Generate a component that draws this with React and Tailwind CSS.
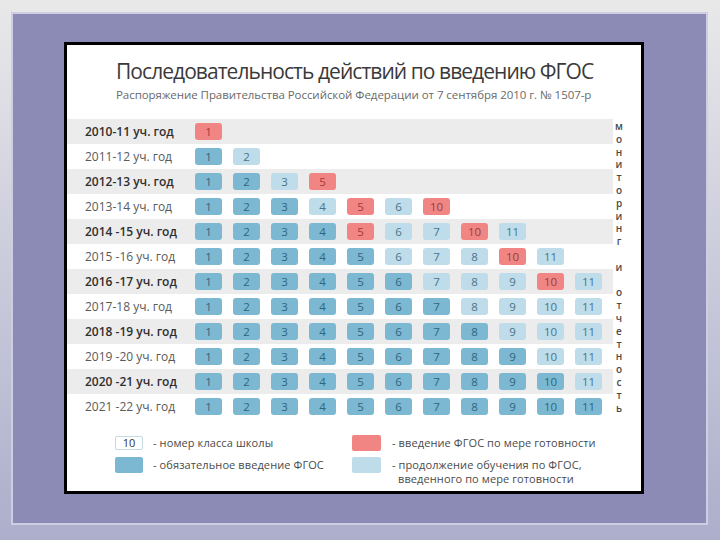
import React from 'react';

const CELL = {
    d: 'bg-[#7cb8d1] text-[#2f6580]',
    l: 'bg-[#bedcea] text-[#4b7488]',
    r: 'bg-[#f08584] text-[#9a3c3c]',
};

const LABELS = [
    '2010-11 уч. год',
    '2011-12 уч. год',
    '2012-13 уч. год',
    '2013-14 уч. год',
    '2014 -15 уч. год',
    '2015 -16 уч. год',
    '2016 -17 уч. год',
    '2017-18 уч. год',
    '2018 -19 уч. год',
    '2019 -20 уч. год',
    '2020 -21 уч. год',
    '2021 -22 уч. год',
];

const EARLY = [
    [[1, 'r']],
    [[1, 'd'], [2, 'l']],
    [[1, 'd'], [2, 'd'], [3, 'l'], [5, 'r']],
    [[1, 'd'], [2, 'd'], [3, 'd'], [4, 'l'], [5, 'r'], [6, 'l'], [10, 'r']],
    [[1, 'd'], [2, 'd'], [3, 'd'], [4, 'd'], [5, 'r'], [6, 'l'], [7, 'l'], [10, 'r'], [11, 'l']],
    [[1, 'd'], [2, 'd'], [3, 'd'], [4, 'd'], [5, 'd'], [6, 'l'], [7, 'l'], [8, 'l'], [10, 'r'], [11, 'l']],
    [[1, 'd'], [2, 'd'], [3, 'd'], [4, 'd'], [5, 'd'], [6, 'd'], [7, 'l'], [8, 'l'], [9, 'l'], [10, 'r'], [11, 'l']],
];

// rows 8..12: all grades, mandatory up to (index) grades
const ROWS = LABELS.map((label, i) => {
    if (i < EARLY.length) return { label, cells: EARLY[i] };
    const cells = [];
    for (let g = 1; g <= 11; g++) cells.push([g, g <= i ? 'd' : 'l']);
    return { label, cells };
});

const VERTICAL = 'мониторинг и отчетность'.split('');

function Row({ row, index }) {
    const odd = index % 2 === 0;
    return (
        <div className={`flex h-[25px] items-center ${odd ? 'bg-[#ececec]' : 'bg-white'}`}>
            <div className={`w-[128px] pl-[18px] text-[12px] ${odd ? 'font-semibold text-[#2f2f2f]' : 'text-[#5a5a5a]'}`}>
                {row.label}
            </div>
            <div className="flex gap-[11px]">
                {row.cells.map(([n, t]) => (
                    <div key={n} className={`flex h-[17px] w-[27px] items-center justify-center rounded-[3px] text-[11.5px] ${CELL[t]}`}>
                        {n}
                    </div>
                ))}
            </div>
        </div>
    );
}

export default function App() {
    return (
        <div className="h-[540px] w-[720px] overflow-hidden bg-gradient-to-b from-[#e9e9ea] to-[#acaecb] pl-[11px] pt-[12px]" style={{ fontFamily: '"Open Sans", "Noto Sans", sans-serif' }}>
            <div className="h-[513px] w-[697px] border-2 border-[#cdcee3] bg-[#8b8bb6] pl-[51px] pt-[28px]">
                <div className="h-[452px] w-[580px] border-[3px] border-black bg-white">
                    <div className="pl-[49px] pt-[13px]">
                        <div className="text-[21px] leading-[26px] tracking-[-0.95px] text-[#3a3a3a]">
                            Последовательность действий по введению ФГОС
                        </div>
                        <div className="mt-[4px] text-[11.5px] leading-[14px] tracking-[-0.05px] text-[#6a6a6a]">
                            Распоряжение Правительства Российской Федерации от 7 сентября 2010 г. № 1507-р
                        </div>
                    </div>

                    <div className="mt-[17px] flex">
                        <div className="w-[546px]">
                            {ROWS.map((row, i) => (
                                <Row key={row.label} row={row} index={i} />
                            ))}
                        </div>
                        <div className="flex w-[12px] flex-col items-center pt-[1px] text-[10px] font-semibold leading-[12.8px] text-[#4a4a4a]">
                            {VERTICAL.map((ch, i) => (
                                <span key={i} className="h-[12.8px]">{ch === ' ' ? '\u00a0' : ch}</span>
                            ))}
                        </div>
                    </div>

                    <div className="mt-[16px] grid grid-cols-[237px_1fr] gap-y-[6px] pl-[48px] text-[11px] font-medium leading-[14px] tracking-[0.1px] text-[#4a4a4a]">
                        <div className="flex items-center gap-[10px]">
                            <div className="flex h-[14px] w-[28px] items-center justify-center rounded-[2px] border border-[#c5d9e2] bg-white text-[11px] tracking-normal text-[#333]">10</div>
                            <span>- номер класса школы</span>
                        </div>
                        <div className="flex items-center gap-[11px]">
                            <div className="h-[16px] w-[29px] rounded-[2px] bg-[#f08584]" />
                            <span>- введение ФГОС по мере готовности</span>
                        </div>
                        <div className="flex items-start gap-[10px]">
                            <div className="h-[16px] w-[28px] rounded-[2px] bg-[#7cb8d1]" />
                            <span className="pt-[1px]">- обязательное введение ФГОС</span>
                        </div>
                        <div className="flex items-start gap-[11px]">
                            <div className="h-[16px] w-[29px] rounded-[2px] bg-[#bedcea]" />
                            <div className="flex flex-col pt-[1px]">
                                <span>- продолжение обучения по ФГОС,</span>
                                <span className="pl-[6px]">введенного по мере готовности</span>
                            </div>
                        </div>
                    </div>
                </div>
            </div>
        </div>
    );
}
